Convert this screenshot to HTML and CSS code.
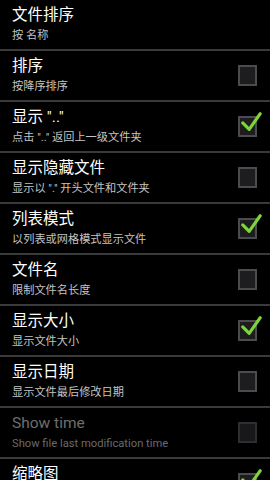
FILE: index.html
```html
<!DOCTYPE html>
<html lang="zh">
<head>
<meta charset="utf-8">
<link rel="stylesheet" href="styles.css">
</head>
<body>
<div class="list">
  <div class="row first">
    <div class="text"><div class="title">文件排序</div><div class="sub">按 名称</div></div>
  </div>
  <div class="row">
    <div class="text"><div class="title">排序</div><div class="sub">按降序排序</div></div>
    <span class="box"></span>
  </div>
  <div class="row">
    <div class="text"><div class="title">显示 ".."</div><div class="sub">点击 ".." 返回上一级文件夹</div></div>
    <span class="box"><svg class="check" viewBox="0 0 24 24"><path d="M3 13 L10 20 L22 3"/></svg></span>
  </div>
  <div class="row">
    <div class="text"><div class="title">显示隐藏文件</div><div class="sub">显示以 "." 开头文件和文件夹</div></div>
    <span class="box"></span>
  </div>
  <div class="row">
    <div class="text"><div class="title">列表模式</div><div class="sub">以列表或网格模式显示文件</div></div>
    <span class="box"><svg class="check" viewBox="0 0 24 24"><path d="M3 13 L10 20 L22 3"/></svg></span>
  </div>
  <div class="row">
    <div class="text"><div class="title">文件名</div><div class="sub">限制文件名长度</div></div>
    <span class="box"></span>
  </div>
  <div class="row">
    <div class="text"><div class="title">显示大小</div><div class="sub">显示文件大小</div></div>
    <span class="box"><svg class="check" viewBox="0 0 24 24"><path d="M3 13 L10 20 L22 3"/></svg></span>
  </div>
  <div class="row">
    <div class="text"><div class="title">显示日期</div><div class="sub">显示文件最后修改日期</div></div>
    <span class="box"></span>
  </div>
  <div class="row disabled">
    <div class="text"><div class="title">Show time</div><div class="sub">Show file last modification time</div></div>
    <span class="box"></span>
  </div>
  <div class="row last">
    <div class="text"><div class="title">缩略图</div></div>
    <span class="box"><svg class="check" viewBox="0 0 24 24"><path d="M3 13 L10 20 L22 3"/></svg></span>
  </div>
</div>
</body>
</html>
```
FILE: styles.css
```css
html, body {
  margin: 0;
  padding: 0;
  background: #000;
  width: 270px;
  height: 480px;
  overflow: hidden;
}
body {
  font-family: Roboto, "Noto Sans CJK SC", sans-serif;
  color: #fff;
}
.list {
  display: flex;
  flex-direction: column;
}
.row {
  display: flex;
  align-items: center;
  justify-content: space-between;
  height: 49px;
  padding: 0 13px 0 12px;
  border-top: 2px solid #3a3a3a;
  flex-shrink: 0;
}
.row.first {
  border-top: none;
}
.text {
  display: flex;
  flex-direction: column;
  gap: 5px;
}
.title {
  font-size: 15.5px;
  line-height: 18px;
  color: #fff;
  white-space: nowrap;
}
.sub {
  font-size: 11.2px;
  line-height: 14px;
  color: #c4c4c4;
  white-space: nowrap;
}
.box {
  position: relative;
  width: 15px;
  height: 17px;
  border: 2px solid #4c4c4e;
  background: #1d1d20;
  flex-shrink: 0;
}
.check {
  position: absolute;
  left: 0;
  top: -8px;
  width: 22px;
  height: 24px;
  fill: none;
  stroke: #7fd43a;
  stroke-width: 3.4;
  stroke-linecap: round;
  stroke-linejoin: round;
}
.disabled .title {
  color: #6e6e6e;
}
.disabled .sub {
  font-size: 11.2px;
  color: #6a6a6a;
}
.disabled .box {
  border-color: #2e2e30;
  background: #18181a;
}
.last .text {
  padding-bottom: 19px;
}
```
